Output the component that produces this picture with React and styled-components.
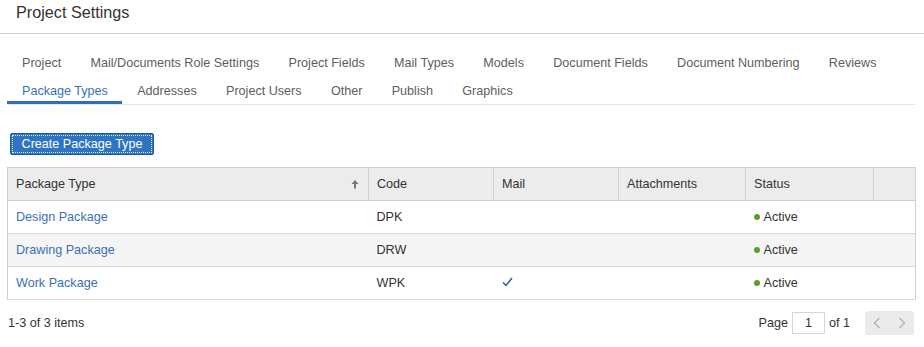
import styled, { createGlobalStyle } from "styled-components";

const Global = createGlobalStyle`
  body {
    margin: 0;
    background: #fff;
    font-family: "Liberation Sans", Arial, sans-serif;
    font-size: 12.6px;
    color: #333;
  }
`;

const Page = styled.div`
  width: 924px;
`;

const Header = styled.div`
  height: 33px;
  border-bottom: 1px solid #cfcfcf;
  padding-left: 16px;
  display: flex;
  align-items: center;
  font-size: 16.2px;
  color: #333;
  line-height: 24px;
`;

const HeaderTitle = styled.span`
  margin-top: -9px;
`;

const Content = styled.div`
  padding: 14px 9px 0 7px;
`;

const Tabs = styled.div`
  display: flex;
  flex-wrap: wrap;
  border-bottom: 1px solid #e6e6e6;
`;

const Tab = styled.div`
  height: 28px;
  box-sizing: border-box;
  padding: 5px 14.3px 0 15px;
  display: flex;
  align-items: center;
  color: ${(p) => (p.$active ? "#3a72b6" : "#5e5e5e")};
  border-bottom: 3px solid ${(p) => (p.$active ? "#2f6fba" : "transparent")};
  white-space: nowrap;
`;

const Toolbar = styled.div`
  padding: 28px 0 12px 3px;
`;

const PrimaryButton = styled.button`
  position: relative;
  height: 22px;
  width: 144px;
  background: #2f74c0;
  border: 1px solid #2160a3;
  border-radius: 2px;
  color: #fff;
  font-family: inherit;
  font-size: 12.6px;
  padding: 0;
  &::after {
    content: "";
    position: absolute;
    inset: 1px;
    border: 1px dotted #dde8f5;
  }
`;

const Grid = styled.table`
  width: 908px;
  border-collapse: collapse;
  table-layout: fixed;
  border: 1px solid #cfcfcf;
`;

const HeadCell = styled.th`
  height: 32px;
  background: #ececec;
  border-left: 1px solid #d2d2d2;
  border-bottom: 1px solid #cfcfcf;
  text-align: left;
  font-weight: normal;
  color: #333;
  padding: 0 9px 0 8px;
  &:first-child {
    border-left: none;
  }
`;

const HeadInner = styled.div`
  display: flex;
  justify-content: space-between;
  align-items: center;
`;

const Row = styled.tr`
  background: ${(p) => (p.$alt ? "#f5f5f5" : "#fff")};
  border-bottom: 1px solid #d6d6d6;
`;

const Cell = styled.td`
  height: 32px;
  padding: 0 9px 0 8px;
  color: #333;
`;

const Link = styled.a`
  color: #3a70b5;
  text-decoration: none;
`;

const Status = styled.span`
  &::before {
    content: "";
    display: inline-block;
    width: 6px;
    height: 6px;
    margin-right: 4px;
    border-radius: 50%;
    background: #5a9e2f;
    vertical-align: 1px;
  }
`;

const Footer = styled.div`
  display: flex;
  justify-content: space-between;
  align-items: center;
  padding: 11px 1px 0 1px;
  height: 24px;
`;

const Pager = styled.div`
  display: flex;
  align-items: center;
  gap: 4px;
`;

const PageInput = styled.div`
  width: 31px;
  height: 20px;
  border: 1px solid #d6d6d6;
  display: flex;
  align-items: center;
  justify-content: center;
`;

const NavGroup = styled.div`
  margin-left: 11px;
  width: 49px;
  height: 25px;
  background: #ebebeb;
  border-radius: 3px;
  display: flex;
  align-items: center;
  justify-content: space-around;
`;

const SortArrow = () => (
  <svg width="8" height="10" viewBox="0 0 8 10">
    <path d="M4 1 L7.5 5 H5 V9.5 H3 V5 H0.5 Z" fill="#777" />
  </svg>
);

const Check = () => (
  <svg width="11" height="10" viewBox="0 0 11 10">
    <polyline points="1,5.5 4,8.5 10,1" fill="none" stroke="#2c5aa8" strokeWidth="1.5" />
  </svg>
);

const Chevron = ({ dir }) => (
  <svg width="8" height="12" viewBox="0 0 8 12">
    <polyline
      points={dir === "left" ? "6.5,1 1.5,6 6.5,11" : "1.5,1 6.5,6 1.5,11"}
      fill="none"
      stroke="#b3b3b3"
      strokeWidth="1.4"
    />
  </svg>
);

const tabs = [
  "Project",
  "Mail/Documents Role Settings",
  "Project Fields",
  "Mail Types",
  "Models",
  "Document Fields",
  "Document Numbering",
  "Reviews",
];
const tabs2 = ["Package Types", "Addresses", "Project Users", "Other", "Publish", "Graphics"];

const rows = [
  { name: "Design Package", code: "DPK", mail: false },
  { name: "Drawing Package", code: "DRW", mail: false },
  { name: "Work Package", code: "WPK", mail: true },
];

export default function App() {
  return (
    <Page>
      <Global />
      <Header>
        <HeaderTitle>Project Settings</HeaderTitle>
      </Header>
      <Content>
        <Tabs>
          {tabs.map((t) => (
            <Tab key={t}>{t}</Tab>
          ))}
          <div style={{ flexBasis: "100%" }} />
          {tabs2.map((t, i) => (
            <Tab key={t} $active={i === 0}>
              {t}
            </Tab>
          ))}
        </Tabs>
        <Toolbar>
          <PrimaryButton>Create Package Type</PrimaryButton>
        </Toolbar>
        <Grid>
          <colgroup>
            <col style={{ width: 361 }} />
            <col style={{ width: 125 }} />
            <col style={{ width: 125 }} />
            <col style={{ width: 127 }} />
            <col style={{ width: 128 }} />
            <col style={{ width: 42 }} />
          </colgroup>
          <thead>
            <tr>
              <HeadCell>
                <HeadInner>
                  Package Type
                  <SortArrow />
                </HeadInner>
              </HeadCell>
              <HeadCell>Code</HeadCell>
              <HeadCell>Mail</HeadCell>
              <HeadCell>Attachments</HeadCell>
              <HeadCell>Status</HeadCell>
              <HeadCell />
            </tr>
          </thead>
          <tbody>
            {rows.map((r, i) => (
              <Row key={r.code} $alt={i === 1}>
                <Cell>
                  <Link href="#">{r.name}</Link>
                </Cell>
                <Cell>{r.code}</Cell>
                <Cell>{r.mail && <Check />}</Cell>
                <Cell />
                <Cell>
                  <Status>Active</Status>
                </Cell>
                <Cell />
              </Row>
            ))}
          </tbody>
        </Grid>
        <Footer>
          <span>1-3 of 3 items</span>
          <Pager>
            <span>Page</span>
            <PageInput>1</PageInput>
            <span>of 1</span>
            <NavGroup>
              <Chevron dir="left" />
              <Chevron dir="right" />
            </NavGroup>
          </Pager>
        </Footer>
      </Content>
    </Page>
  );
}
